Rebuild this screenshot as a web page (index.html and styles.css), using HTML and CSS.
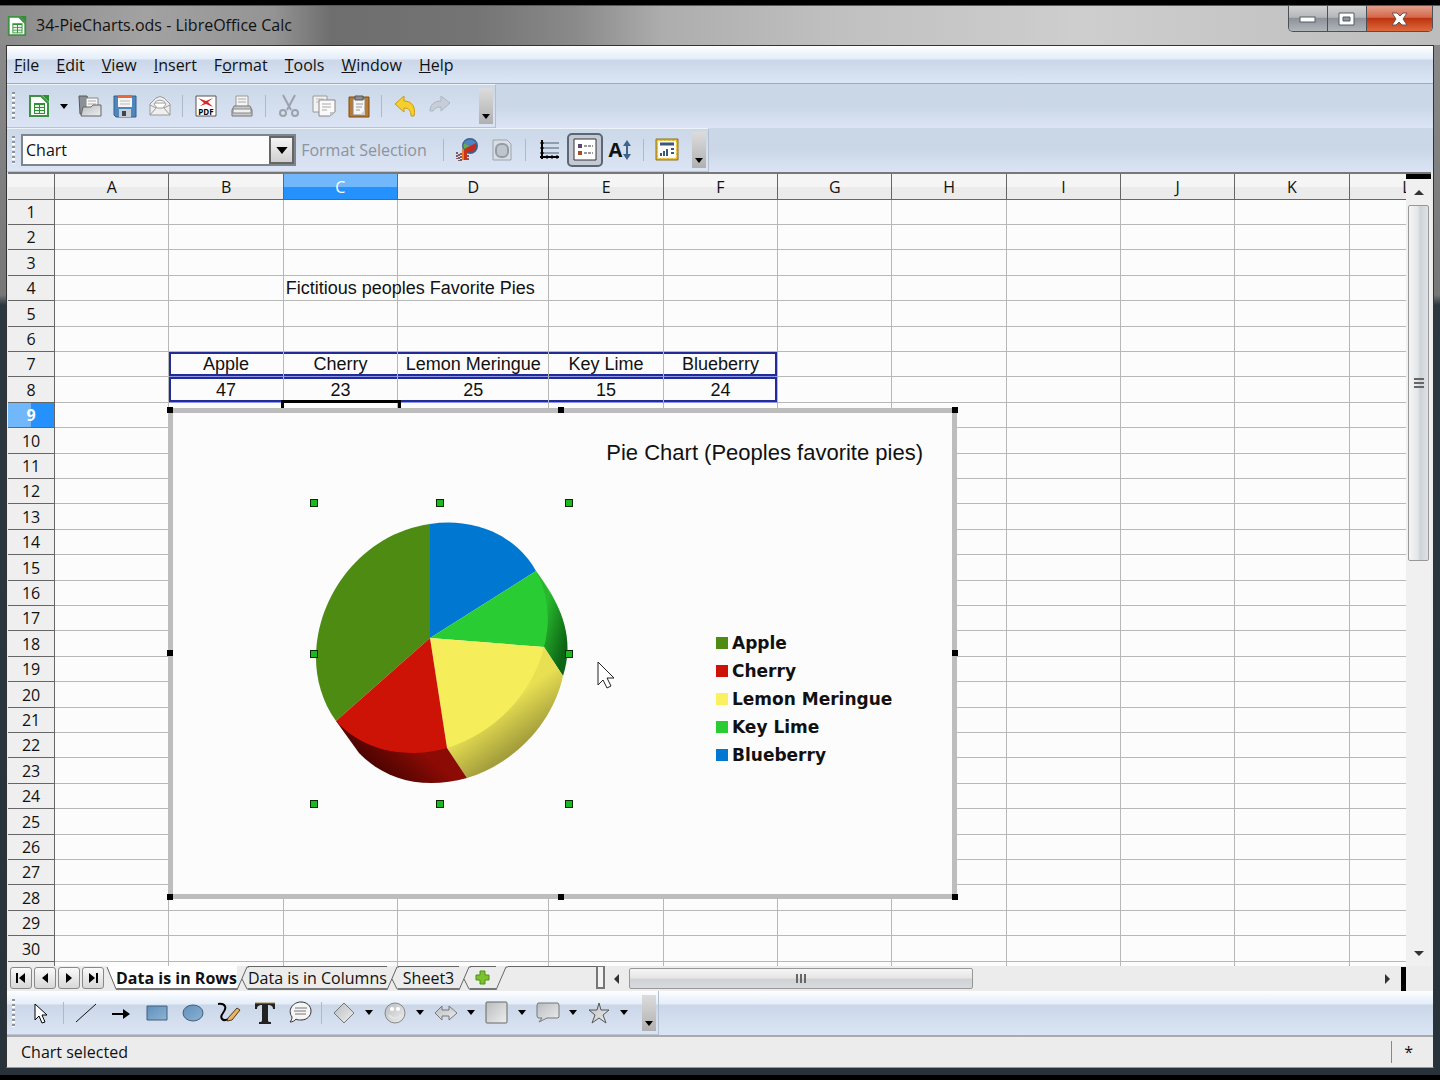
FILE: index.html
```html
<!DOCTYPE html>
<html lang="en">
<head>
    <meta charset="UTF-8">
    <meta name="viewport" content="width=device-width, initial-scale=1.0">
    <title>34-PieCharts.ods - LibreOffice Calc</title>
    <link rel="stylesheet" href="styles.css">
</head>
<body>
    <!-- gradients shared by the icons -->
    <svg class="defs" width="0" height="0" aria-hidden="true">
        <defs>
            <linearGradient id="silver" x1="0" y1="0" x2="1" y2="1"><stop offset="0" stop-color="#b9bcc0"/><stop offset="1" stop-color="#eeeeee"/></linearGradient>
            <linearGradient id="blue" x1="0" y1="0" x2="1" y2="1"><stop offset="0" stop-color="#5f8fbb"/><stop offset="1" stop-color="#8fb3d3"/></linearGradient>
            <symbol id="calc" viewBox="0 0 24 24">
                <path d="M3 2h11l7 7v13H3z" fill="#fff" stroke="#3d9140" stroke-width="2"/>
                <path d="M15 1h7v7z" fill="#2f8f35"/>
                <path d="M7 9h11v11H7z" fill="#2f8f35"/>
                <path d="M8 11h4v2H8zM13 11h4v2h-4zM8 14h4v2H8zM13 14h4v2h-4zM8 17h4v2H8zM13 17h4v2h-4z" fill="#e8f5e8"/>
            </symbol>
            <symbol id="down" viewBox="0 0 8 5"><path d="M0 0h8L4 5z"/></symbol>
        </defs>
    </svg>

    <div class="window">
        <header class="titlebar">
            <svg class="app-icon" width="22" height="24"><use href="#calc"/></svg>
            <h1>34-PieCharts.ods - LibreOffice Calc</h1>
            <div class="window-buttons">
                <button type="button" class="min" aria-label="Minimize"><svg width="18" height="10"><rect x="1" y="3" width="15" height="5" fill="#fff" stroke="#555b66"/></svg></button>
                <button type="button" class="max" aria-label="Maximize"><svg width="18" height="14"><path d="M1 1h15v12H1z" fill="#fff" stroke="#555b66"/><path d="M5 5h7v4H5z" fill="#8e959e" stroke="#555b66"/></svg></button>
                <button type="button" class="close" aria-label="Close"><svg width="18" height="14"><path d="M1 1h5l3 3 3-3h4l-4 6 4 6h-5l-3-3-3 3H1l4-6z" fill="#fff" stroke="#6b5050"/></svg></button>
            </div>
        </header>

        <div class="client">
            <nav class="menubar">
                <button type="button"><u>F</u>ile</button>
                <button type="button"><u>E</u>dit</button>
                <button type="button"><u>V</u>iew</button>
                <button type="button"><u>I</u>nsert</button>
                <button type="button">F<u>o</u>rmat</button>
                <button type="button"><u>T</u>ools</button>
                <button type="button"><u>W</u>indow</button>
                <button type="button"><u>H</u>elp</button>
            </nav>

            <div class="dock">
                <div class="toolbar">
                    <span class="grip"></span>
                    <button type="button" class="tool" aria-label="New"><svg width="24" height="24"><use href="#calc"/></svg></button>
                    <button type="button" class="drop" aria-label="New menu"><svg width="8" height="5"><use href="#down"/></svg></button>
                    <button type="button" class="tool" aria-label="Open"><svg width="24" height="24" viewBox="0 0 24 24"><path d="M1 2h8l1 3v15H2z" fill="#8b9096" stroke="#55595d"/><path d="M8 4h12v12H8z" fill="#f7f7f7" stroke="#888"/><path d="M10 7h8M10 10h8" stroke="#aaa"/><path d="M5 13h8l2-2h8v11H3z" fill="url(#silver)" stroke="#666"/></svg></button>
                    <button type="button" class="tool" aria-label="Save"><svg width="24" height="24" viewBox="0 0 24 24"><path d="M1 2h22v21H3l-2-2z" fill="#4f87bd" stroke="#33618f"/><path d="M5 1h14v12H5z" fill="#f6f6f6"/><path d="M5 1h14v3H5z" fill="#e8683c"/><path d="M7 7h10M7 10h10" stroke="#bbb"/><path d="M6 15h12v8H6z" fill="#c6ced6"/><path d="M9 17h4v5H9z" fill="#3d4650"/></svg></button>
                    <button type="button" class="tool" aria-label="E-mail"><svg width="24" height="24" viewBox="0 0 24 24"><path d="M2 10l6-6q4-3 8 0l6 6v11H2z" fill="#efefef" stroke="#9a9a9a"/><path d="M6 10c2-5 10-5 12 0l-3 4H9z" fill="#fff" stroke="#9a9a9a"/><path d="M2 11l6 3-6 7M22 11l-6 3 6 7M7 9h10" fill="none" stroke="#9a9a9a"/></svg></button>
                    <span class="sep"></span>
                    <button type="button" class="tool" aria-label="Export as PDF"><svg width="24" height="24" viewBox="0 0 24 24"><path d="M2 2h20v20H2z" fill="#fff" stroke="#555"/><path d="M4 4l8 3 7-3-5 4 5 5-7-3-6 2 4-3z" fill="#d9262c"/><text x="12" y="21" class="pdf-text">PDF</text></svg></button>
                    <button type="button" class="tool wide" aria-label="Print"><svg width="24" height="24" viewBox="0 0 24 24"><path d="M6 2h12v11H6z" fill="#f4f4f4" stroke="#999"/><path d="M8 5h8M8 8h8" stroke="#aaa"/><path d="M4 12h16l2 4v6H2v-6z" fill="#c9c9c9" stroke="#777"/><path d="M3 15h18v4H3z" fill="#f0f0f0" stroke="#888"/></svg></button>
                    <span class="sep"></span>
                    <button type="button" class="tool" aria-label="Cut"><svg width="24" height="24" viewBox="0 0 24 24" fill="none" stroke="#9ba2ab"><path d="M6 1l8 15M18 1l-8 15" stroke-width="2"/><circle cx="6" cy="19" r="3" stroke-width="2"/><circle cx="18" cy="19" r="3" stroke-width="2"/></svg></button>
                    <button type="button" class="tool" aria-label="Copy"><svg width="24" height="24" viewBox="0 0 24 24"><path d="M1 2h14v16H1z" fill="#f2f2f2" stroke="#9a9a9a"/><path d="M4 5h8M4 8h8" stroke="#bbb"/><path d="M7 6h16v12l-5 4H7z" fill="#fafafa" stroke="#888"/><path d="M10 10h9M10 13h9M10 16h5" stroke="#aaa"/><path d="M23 18h-5v4z" fill="#c4c4c4"/></svg></button>
                    <button type="button" class="tool" aria-label="Paste"><svg width="24" height="24" viewBox="0 0 24 24"><path d="M2 3h20v20H2z" fill="#b9792f" stroke="#7a4c16"/><path d="M6 5h12v16H6z" fill="#f6f6f6" stroke="#888"/><path d="M8 2h8v4H8z" fill="#8b8f93" stroke="#555"/><path d="M9 10h7M9 13h6M9 16h4" stroke="#999"/><path d="M13 21l5-5v5z" fill="#ccc"/></svg></button>
                    <span class="sep"></span>
                    <button type="button" class="tool" aria-label="Undo"><svg width="24" height="24" viewBox="0 0 24 24"><path d="M2 10l9-8v5c8 0 12 6 10 15h-3c0-5-2-8-7-8v4z" fill="#f7cf2c" stroke="#c79a12"/></svg></button>
                    <button type="button" class="tool" aria-label="Redo"><svg width="24" height="24" viewBox="0 0 24 24"><path d="M22 9l-9-7v5C6 7 2 11 2 17h3c2-3 4-4 8-4v4z" fill="#c6ced8" stroke="#adb5bf"/></svg></button>
                    <button type="button" class="more first-more" aria-label="More"><svg width="8" height="5"><use href="#down"/></svg></button>
                </div>
            </div>

            <div class="dock">
                <div class="toolbar">
                    <span class="grip"></span>
                    <div class="combo">
                        <select aria-label="Chart element"><option>Chart</option></select>
                        <span class="combo-arrow"><svg width="12" height="7"><use href="#down"/></svg></span>
                    </div>
                    <button type="button" class="format" disabled>Format Selection</button>
                    <span class="sep"></span>
                    <button type="button" class="tool" aria-label="Chart type"><svg width="24" height="24" viewBox="0 0 24 24"><circle cx="15" cy="8" r="7" fill="#c92a20" stroke="#3e5f8c" stroke-width="2"/><path d="M15 8L9 5a7 7 0 0 0 0 6z" fill="#5cae57"/><path d="M15 8L9 5a7 7 0 0 1 12 0z" fill="#4e86c4"/><path d="M7 11h5v11H7z" fill="#c83418"/><path d="M7 11h2v11H7z" fill="#ee7d2a"/><path d="M2 14v7M4 16v7M6 15v8M13 17v5" stroke="#7c5b64" stroke-width="2" stroke-dasharray="2 1"/></svg></button>
                    <button type="button" class="tool" aria-label="Data table"><svg width="24" height="24" viewBox="0 0 24 24"><path d="M3 2h14l4 4v16H3z" fill="#d9dee4" stroke="#9ca3ab"/><rect x="6" y="6" width="12" height="13" rx="5" fill="#bfc5cc" stroke="#949ba3" stroke-width="2"/></svg></button>
                    <span class="sep wide-sep"></span>
                    <button type="button" class="tool" aria-label="Horizontal grids"><svg width="24" height="24" viewBox="0 0 24 24"><path d="M3 5h18M3 10h18M3 15h18" stroke="#4b5f73"/><path d="M4 2v19M2 19h19" stroke="#000" stroke-width="2"/><path d="M2 5h4M2 10h4M2 15h4M9 17v4M14 17v4M19 17v4" stroke="#000"/></svg></button>
                    <button type="button" class="tool pressed" aria-label="Legend" aria-pressed="true"><svg width="24" height="24" viewBox="0 0 24 24"><path d="M1 1h22v21H1z" fill="#fff" stroke="#333"/><path d="M5 6h4v4H5z" fill="#5c4770"/><path d="M5 13h4v4H5z" fill="#a34e25"/><path d="M11 8h9M11 15h9" stroke="#333" stroke-dasharray="3 1"/></svg></button>
                    <button type="button" class="tool" aria-label="Scale text"><span class="scale-text">A</span><svg width="10" height="22" viewBox="0 0 10 22"><path d="M5 4v14" stroke="#3e6288" stroke-width="2"/><path d="M5 1l4 6H1zM5 21l4-6H1z" fill="#3e6288"/></svg></button>
                    <span class="sep"></span>
                    <button type="button" class="tool" aria-label="Automatic layout"><svg width="24" height="24" viewBox="0 0 24 24"><path d="M1 1h22v21H1z" fill="#e5b92a" stroke="#8e7420"/><path d="M3 3h18v17H3z" fill="#fff" stroke="#f7e9a9" stroke-dasharray="2 2"/><path d="M5 6h14" stroke="#3b5876" stroke-width="3"/><path d="M6 18v-3M9 18v-5M12 18v-7M16 11h3M16 15h3" stroke="#3b5876" stroke-width="2"/></svg></button>
                    <button type="button" class="more second-more" aria-label="More"><svg width="8" height="5"><use href="#down"/></svg></button>
                </div>
            </div>

            <main class="workspace">
                <div class="sheet">
                    <table class="grid" id="grid">
                        <thead></thead>
                        <tbody></tbody>
                    </table>

                    <section class="chart">
                        <h2>Pie Chart (Peoples favorite pies)</h2>
                        <div class="chart-body">
                            <svg class="pie" width="264" height="310" viewBox="0 0 264 310">
                                <defs>
                                    <linearGradient id="limeSide" gradientUnits="userSpaceOnUse" x1="234" y1="120" x2="262" y2="128"><stop offset="0" stop-color="#27b82e"/><stop offset="1" stop-color="#0d6414"/></linearGradient>
                                    <linearGradient id="lemonSide" gradientUnits="userSpaceOnUse" x1="190" y1="210" x2="215" y2="245"><stop offset="0" stop-color="#e8e052"/><stop offset="1" stop-color="#a39d3c"/></linearGradient>
                                    <linearGradient id="cherrySide" gradientUnits="userSpaceOnUse" x1="110" y1="250" x2="80" y2="285"><stop offset="0" stop-color="#8d0b05"/><stop offset="1" stop-color="#480300"/></linearGradient>
                                </defs>
                                <path d="M227 73C243 95 269 132 254 178L235 149Z" fill="url(#limeSide)"/>
                                <path d="M235 149L254 178C244 225 205 266 158 280L138 250Z" fill="url(#lemonSide)"/>
                                <path d="M138 250L158 280C112 293 74 280 50 255L27 223Z" fill="url(#cherrySide)"/>
                                <path d="M121 140L27 223C-24 152 28 39 121 26Z" fill="#4d8b13"/>
                                <path d="M121 140V26A126 107 -40 0 1 227 73Z" fill="#0077d0"/>
                                <path d="M121 140L227 73A126 107 -40 0 1 235 149Z" fill="#2acc33"/>
                                <path d="M121 140L235 149A126 107 -40 0 1 138 250Z" fill="#f5ee5a"/>
                                <path d="M121 140L138 250A126 107 -40 0 1 27 223Z" fill="#cc1305"/>
                                <path d="M1 1h8v8H1zM127 1h8v8h-8zM256 1h8v8h-8zM1 152h8v8H1zM256 152h8v8h-8zM1 302h8v8H1zM127 302h8v8h-8zM256 302h8v8h-8z" fill="#062b06"/>
                                <path d="M2 2h6v6H2zM128 2h6v6h-6zM257 2h6v6h-6zM2 153h6v6H2zM257 153h6v6h-6zM2 303h6v6H2zM128 303h6v6h-6zM257 303h6v6h-6z" fill="#1cb81f"/>
                            </svg>
                            <ul class="legend">
                                <li class="apple">Apple</li>
                                <li class="cherry">Cherry</li>
                                <li class="lemon">Lemon Meringue</li>
                                <li class="lime">Key Lime</li>
                                <li class="blueberry">Blueberry</li>
                            </ul>
                        </div>
                        <span class="handle top left"></span><span class="handle top center"></span><span class="handle top right"></span>
                        <span class="handle middle left"></span><span class="handle middle right"></span>
                        <span class="handle bottom left"></span><span class="handle bottom center"></span><span class="handle bottom right"></span>
                        <svg class="cursor" width="18" height="28" viewBox="0 0 18 28"><path d="M1 1v23l5-5 4 8 4-2-4-8h7z" fill="#fff" stroke="#222"/></svg>
                    </section>
                </div>

                <div class="vscroll">
                    <span class="split-row"></span>
                    <button type="button" class="scroll-up" aria-label="Scroll up"><svg width="10" height="6"><path d="M0 6l5-5 5 5z" fill="#333"/></svg></button>
                    <span class="vthumb"><i></i><i></i><i></i></span>
                    <button type="button" class="scroll-down" aria-label="Scroll down"><svg width="10" height="6"><path d="M0 0h10L5 5z" fill="#333"/></svg></button>
                </div>
            </main>

            <div class="tabrow">
                <div class="tabnav">
                    <button type="button" aria-label="First sheet"><svg width="12" height="12"><path d="M2 1v10" stroke="#000" stroke-width="2"/><path d="M10 1v10L4 6z"/></svg></button>
                    <button type="button" aria-label="Previous sheet"><svg width="12" height="12"><path d="M9 1v10L3 6z"/></svg></button>
                    <button type="button" aria-label="Next sheet"><svg width="12" height="12"><path d="M3 1v10l6-5z"/></svg></button>
                    <button type="button" aria-label="Last sheet"><svg width="12" height="12"><path d="M2 1v10l6-5z"/><path d="M10 1v10" stroke="#000" stroke-width="2"/></svg></button>
                </div>
                <div class="tabs">
                    <svg class="edge" width="12" height="25"><path d="M2 0h10v24z" fill="#fff"/><path d="M2 1l9 22" stroke="#666" fill="none"/></svg>
                    <button type="button" class="tab active">Data is in Rows</button>
                    <svg class="edge" width="12" height="25"><path d="M0 24L10 1h2M5 13l5 10h2" stroke="#666" fill="none"/></svg>
                    <button type="button" class="tab">Data is in Columns</button>
                    <svg class="edge" width="12" height="25"><path d="M0 24L10 1h2M5 13l5 10h2" stroke="#666" fill="none"/></svg>
                    <button type="button" class="tab sheet3">Sheet3</button>
                    <svg class="edge" width="12" height="25"><path d="M0 24L10 1h2M5 13l5 10h2" stroke="#666" fill="none"/></svg>
                    <button type="button" class="tab add" aria-label="Add sheet"><svg width="16" height="16"><path d="M5 1h5v4h4v5h-4v4H5v-4H1V5h4z" fill="#7cc22d" stroke="#4f8f18"/></svg></button>
                    <svg class="edge" width="12" height="25"><path d="M0 24L10 1h2" stroke="#666" fill="none"/></svg>
                    <span class="tabfill"></span>
                    <span class="splitter"></span>
                </div>
                <div class="hscroll">
                    <button type="button" aria-label="Scroll left"><svg width="6" height="10"><path d="M6 0v10L1 5z" fill="#333"/></svg></button>
                    <span class="hthumb"><i></i><i></i><i></i></span>
                    <button type="button" class="scroll-right" aria-label="Scroll right"><svg width="6" height="10"><path d="M0 0v10l5-5z" fill="#333"/></svg></button>
                    <span class="split-col"></span>
                </div>
            </div>

            <div class="dock drawing">
                <div class="toolbar">
                    <span class="grip"></span>
                    <button type="button" class="tool select-tool" aria-label="Select"><svg width="24" height="24" viewBox="0 0 24 24"><path d="M7 3v16l4-4 3 7 3-1-3-7h5z" fill="#fff" stroke="#000"/></svg></button>
                    <span class="sep"></span>
                    <button type="button" class="tool" aria-label="Line"><svg width="24" height="24"><path d="M2 21L22 3" stroke="#111"/></svg></button>
                    <button type="button" class="tool" aria-label="Arrow"><svg width="24" height="24"><path d="M3 13h14" stroke="#000" stroke-width="2"/><path d="M14 8l7 5-7 5z"/></svg></button>
                    <button type="button" class="tool wide" aria-label="Rectangle"><svg width="24" height="24"><path d="M2 5h20v14H2z" fill="url(#blue)" stroke="#41607f"/></svg></button>
                    <button type="button" class="tool" aria-label="Ellipse"><svg width="24" height="24"><ellipse cx="12" cy="12" rx="10" ry="8" fill="url(#blue)" stroke="#41607f"/></svg></button>
                    <button type="button" class="tool wide" aria-label="Freeform line"><svg width="24" height="24"><path d="M1 3c8-1 9 4 5 9s0 9 5 6" fill="none" stroke="#000" stroke-width="2"/><path d="M11 17l9-10 3 2-8 10-5 1z" fill="#e9b55d" stroke="#4b3a20"/></svg></button>
                    <button type="button" class="tool" aria-label="Text"><svg width="24" height="24"><path d="M2 2h20v6h-2c0-3-2-4-5-4v15c0 2 1 2 3 2v2H6v-2c2 0 3 0 3-2V4C6 4 4 5 4 8H2z" fill="#222"/><path d="M2 2h20" stroke="#a98a50"/></svg></button>
                    <button type="button" class="tool" aria-label="Callout"><svg width="24" height="24"><path d="M13 1c6 0 10 4 10 9s-4 9-10 9c-2 0-4 0-5-1-1 2-4 3-6 3 1-1 2-3 2-5-5-7 1-15 9-15z" fill="#f5f5f5" stroke="#333"/><path d="M7 7h12M6 10h12M7 13h11" stroke="#777"/></svg></button>
                    <span class="sep"></span>
                    <button type="button" class="tool" aria-label="Basic shapes"><svg width="24" height="24"><path d="M12 2l10 10-10 10L2 12z" fill="url(#silver)" stroke="#777"/></svg></button>
                    <button type="button" class="drop" aria-label="Basic shapes menu"><svg width="8" height="5"><use href="#down"/></svg></button>
                    <button type="button" class="tool" aria-label="Symbol shapes"><svg width="24" height="24"><circle cx="12" cy="12" r="10" fill="url(#silver)" stroke="#888"/><circle cx="9" cy="8" r="2" fill="#fff"/><circle cx="15" cy="8" r="2" fill="#fff"/><path d="M6 14c3 4 9 4 12 0" fill="none" stroke="#e4e4e4" stroke-width="2"/></svg></button>
                    <button type="button" class="drop" aria-label="Symbol shapes menu"><svg width="8" height="5"><use href="#down"/></svg></button>
                    <button type="button" class="tool" aria-label="Block arrows"><svg width="24" height="24"><path d="M1 12l7-7v4h7V5l8 7-8 7v-4H8v4z" fill="url(#silver)" stroke="#777"/></svg></button>
                    <button type="button" class="drop" aria-label="Block arrows menu"><svg width="8" height="5"><use href="#down"/></svg></button>
                    <button type="button" class="tool" aria-label="Flowcharts"><svg width="24" height="24"><rect x="1" y="1" width="21" height="21" rx="1" fill="url(#silver)" stroke="#666"/></svg></button>
                    <button type="button" class="drop" aria-label="Flowcharts menu"><svg width="8" height="5"><use href="#down"/></svg></button>
                    <button type="button" class="tool" aria-label="Callouts"><svg width="24" height="24"><path d="M2 2h20l1 2v12l-1 1H11l-8 4 3-4H2l-1-2V4z" fill="url(#silver)" stroke="#777"/></svg></button>
                    <button type="button" class="drop" aria-label="Callouts menu"><svg width="8" height="5"><use href="#down"/></svg></button>
                    <button type="button" class="tool" aria-label="Stars"><svg width="24" height="24"><path d="M12 2l2 7h8l-6 5 3 8-7-5-7 5 3-8-6-5h8z" fill="url(#silver)" stroke="#555"/></svg></button>
                    <button type="button" class="drop" aria-label="Stars menu"><svg width="8" height="5"><use href="#down"/></svg></button>
                    <button type="button" class="more third-more" aria-label="More"><svg width="8" height="5"><use href="#down"/></svg></button>
                </div>
            </div>

            <footer class="statusbar">
                <span>Chart selected</span>
                <span class="modified">*</span>
            </footer>
        </div>
    </div>

    <script>
        // fill the spreadsheet grid
        var columns = ["A", "B", "C", "D", "E", "F", "G", "H", "I", "J", "K", "L"];
        var lastRow = 30;
        var cells = {
            C4: "Fictitious peoples Favorite Pies",
            B7: "Apple", C7: "Cherry", D7: "Lemon Meringue", E7: "Key Lime", F7: "Blueberry",
            B8: "47", C8: "23", D8: "25", E8: "15", F8: "24"
        };
        var head = "<tr><th class='corner'></th>";
        columns.forEach(function(c) {
            var cls = c == "C" ? "selected" : c == "D" ? "wide-col" : "";
            head += "<th class='" + cls + "'>" + c + "</th>";
        });
        document.querySelector("#grid thead").innerHTML = head + "</tr>";

        var rows = "";
        // one blank row more fills the strip above the tabs
        for (var r = 1; r <= lastRow + 1; r++) {
            rows += "<tr><th class='" + (r == 9 ? "selected" : "") + "'>" + (r <= lastRow ? r : "") + "</th>";
            columns.forEach(function(c) {
                var id = c + r;
                var cls = "";
                if ((r == 7 || r == 8) && cells[id]) cls = "series";
                if (id == "C9") cls = "active-cell";
                rows += "<td class='" + cls + "'>" + (cells[id] || "") + "</td>";
            });
            rows += "</tr>";
        }
        document.querySelector("#grid tbody").innerHTML = rows;
    </script>
</body>
</html>
```
FILE: styles.css
```css
* {
    box-sizing: border-box;
}

body {
    margin: 0;
    background: #000;
    color: #111;
    font-family: "Open Sans", "Noto Sans", sans-serif;
    font-size: 16px;
}

button {
    margin: 0;
    padding: 0;
    border: 0;
    background: none;
    color: inherit;
    font: inherit;
}

svg {
    display: block;
    flex: none;
}

.defs {
    position: absolute;
}

/* window frame */
.window {
    display: flex;
    flex-direction: column;
    height: 100vh;
    padding: 0 6px 7px;
    border-top: 5px solid #000;
    border-bottom: 5px solid #000;
    background: linear-gradient(#8c8c8c, #777 290px, #2c383f 300px, #27323a);
}

.titlebar {
    display: flex;
    align-items: center;
    height: 40px;
    margin: 0 -6px;
    padding-left: 6px;
    border-top: 1px solid #55595c;
    background: linear-gradient(90deg, #8b8b8b, #a2a2a2 10%, #949494 19%, #6e6e6e 23%, #747474 33%, #8a8a8a 40%, #adadad 46%, #c0c0c0 58%, #cecece 75%, #bdbdbd);
}

.titlebar h1 {
    flex: 1;
    margin: 0 0 2px 8px;
    font-size: 16px;
    font-weight: 400;
}

.window-buttons {
    display: flex;
    align-self: flex-start;
    height: 26px;
    margin-right: 7px;
    border: 1px solid #4c5056;
    border-top: 0;
    border-radius: 0 0 5px 5px;
    overflow: hidden;
}

.window-buttons button {
    display: flex;
    align-items: center;
    justify-content: center;
    width: 39px;
    border-right: 1px solid #4c5056;
    background: linear-gradient(#d2d2d2, #b4b7ba 45%, #8d9399 50%, #b0b5ba);
}

.window-buttons .close {
    width: 65px;
    border-right: 0;
    background: linear-gradient(#e3a08c, #d4674a 45%, #bf3310 50%, #dd6a3c);
}

.client {
    display: flex;
    flex: 1;
    flex-direction: column;
    min-height: 0;
    border: 1px solid #333;
    border-bottom-color: #999;
    background: #ececec;
}

/* menu */
.menubar {
    display: flex;
    gap: 17px;
    height: 38px;
    padding: 1px 7px 0;
    border-bottom: 1px solid #9fabbc;
    background: linear-gradient(#fdfeff, #e4edf8 13px, #cbd7e8 14px, #dae6f5);
}

/* toolbars */
.dock {
    display: flex;
    height: 44px;
    background: linear-gradient(#cad7e7 50%, #dbe4f4);
}

.toolbar {
    display: flex;
    align-items: center;
    padding: 0 2px 0 5px;
    border-top: 1px solid #eef3fa;
    border-right: 1px solid #b4bfce;
    border-bottom: 1px solid #b9c3d1;
    background: linear-gradient(#cbd8e8, #dbe4f4);
}

.grip {
    width: 3px;
    height: 28px;
    margin-right: 6px;
    background: repeating-linear-gradient(#8b94a0 0 2px, #fff 2px 4px, transparent 4px 5px);
}

.tool {
    display: flex;
    align-items: center;
    justify-content: center;
    width: 35px;
    height: 34px;
}

.wide {
    width: 37px;
}

.pressed {
    width: 36px;
    border: 2px solid #5d6673;
    border-radius: 5px;
    background: #c3cad6;
}

.drop {
    display: flex;
    justify-content: center;
    width: 16px;
}

.sep {
    width: 1px;
    height: 22px;
    margin: 0 5px;
    background: #aeb8c6;
}

.wide-sep {
    margin: 0 6px;
}

.more {
    display: flex;
    align-items: flex-end;
    justify-content: center;
    width: 14px;
    height: 36px;
    padding-bottom: 5px;
    background: linear-gradient(#dcdcdc, #b0b0b0);
}

.first-more {
    margin-left: 22px;
}

.second-more {
    margin-left: 8px;
}

.third-more {
    margin-left: 10px;
}

.pdf-text {
    font: 700 8px "Open Sans", sans-serif;
    text-anchor: middle;
}

.scale-text {
    font-size: 20px;
    font-weight: 700;
    line-height: 24px;
}

.combo {
    position: relative;
    width: 275px;
    height: 32px;
    border: 2px solid #7f858d;
    background: #fcfcfc;
}

.combo select {
    width: 100%;
    height: 100%;
    padding: 0 3px;
    border: 0;
    background: none;
    color: #111;
    font: inherit;
    appearance: none;
}

.combo-arrow {
    display: flex;
    position: absolute;
    top: 0;
    right: 0;
    align-items: center;
    justify-content: center;
    width: 25px;
    height: 28px;
    border: 2px solid #666;
    background: linear-gradient(#f5f5f5, #cfcfcf);
    pointer-events: none;
}

.format {
    width: 126px;
    margin: 0 11px 0 5px;
    color: #8b939e;
    white-space: nowrap;
}

/* spreadsheet */
.workspace {
    display: flex;
    flex: 1;
    min-height: 0;
    margin: 0 2px 0 1px;
    border-top: 2px solid #777;
}

.sheet {
    position: relative;
    flex: 1;
    overflow: hidden;
    background: #fcfcfc;
}

.grid {
    width: 1456px;
    border-collapse: separate;
    border-spacing: 0;
    table-layout: fixed;
}

.grid th {
    width: 114px;
    height: 25px;
    padding: 0;
    border-right: 1px solid #666;
    border-bottom: 1px solid #666;
    background: #efefef;
    font-weight: 400;
    line-height: 20px;
}

.grid .corner {
    width: 47px;
}

.grid .wide-col {
    width: 151px;
}

.grid thead th {
    height: 26px;
    background: linear-gradient(#f5f5f5 50%, #ebebeb 50%);
}

.grid thead .selected {
    background: linear-gradient(#70b7fc 50%, #2591fc 50%);
    color: #fff;
}

.grid tbody .selected {
    background: linear-gradient(90deg, #70b7fc 50%, #2591fc 50%);
    color: #fff;
    font-weight: 700;
}

.grid td {
    padding: 0 2px;
    border-right: 1px solid #b8b8b8;
    border-bottom: 1px solid #b8b8b8;
    font-family: "Liberation Sans", Arial, sans-serif;
    font-size: 18px;
    line-height: 20px;
    white-space: nowrap;
}

.grid tbody tr:nth-child(5n+3) th,
.grid tbody tr:nth-child(5n) th {
    height: 26px;
}

.grid .series {
    border-bottom-color: #8a96e8;
    box-shadow: inset 0 2px #232b96, inset 0 -2px #232b96;
    text-align: center;
}

.grid .series:nth-child(3) {
    box-shadow: inset 0 2px #232b96, inset 0 -2px #232b96, inset 2px 0 #232b96;
}

.grid .series:nth-child(7) {
    box-shadow: inset 0 2px #232b96, inset 0 -2px #232b96, inset -2px 0 #232b96;
}

.grid .active-cell {
    outline: 3px solid #000;
}

/* chart object */
.chart {
    position: absolute;
    top: 234px;
    left: 160px;
    width: 789px;
    height: 491px;
    padding: 25px 29px 0 0;
    border: 5px solid #bdbdbd;
    background: #fcfcfc;
}

.chart h2 {
    margin: 0;
    font-family: "Liberation Sans", Arial, sans-serif;
    font-size: 22px;
    font-weight: 400;
    line-height: 30px;
    text-align: right;
}

.chart-body {
    display: flex;
    margin: 30px 0 0 136px;
}

.legend {
    margin: 131px 0 0 143px;
    padding: 0;
    font-family: "DejaVu Sans", Verdana, sans-serif;
    font-size: 17px;
    font-weight: 700;
    line-height: 28px;
    list-style: none;
}

.legend li {
    display: flex;
    gap: 4px;
    align-items: center;
    white-space: nowrap;
}

.legend li::before {
    width: 12px;
    height: 12px;
    background: currentColor;
    content: "";
}

.legend .apple::before { background: #4d8b13; }
.legend .cherry::before { background: #cc1305; }
.legend .lemon::before { background: #fbf15e; }
.legend .lime::before { background: #2acc33; }
.legend .blueberry::before { background: #0077d0; }

.handle {
    position: absolute;
    width: 6px;
    height: 6px;
    background: #000;
}

.handle.top { top: -6px; }
.handle.middle { top: calc(50% - 4px); }
.handle.bottom { bottom: -6px; }
.handle.left { left: -6px; }
.handle.center { left: calc(50% - 5px); }
.handle.right { right: -6px; }

.cursor {
    position: absolute;
    top: 248px;
    left: 424px;
}

/* scrollbars */
.vscroll {
    display: flex;
    flex-direction: column;
    align-items: center;
    width: 25px;
    background: #f0f0f0;
}

.split-row {
    width: 100%;
    height: 5px;
    background: #000;
}

.scroll-up {
    padding: 10px 6px;
}

.scroll-down {
    margin-top: auto;
    padding: 9px 6px;
}

.vthumb,
.hthumb {
    display: flex;
    align-items: center;
    justify-content: center;
    gap: 2px;
    border: 1px solid #989898;
    border-radius: 2px;
}

.vthumb {
    flex-direction: column;
    width: 21px;
    height: 45%;
    background: linear-gradient(90deg, #f5f5f5, #e4e6e8 45%, #cdd3d8 60%, #dfe2e5);
}

.vthumb i {
    width: 10px;
    height: 2px;
    background: #666;
}

.hthumb {
    width: 43%;
    height: 21px;
    background: linear-gradient(#f5f5f5, #e6e6e6 45%, #d0d3d6 55%, #d8dadc);
}

.hthumb i {
    width: 2px;
    height: 9px;
    background: #666;
}

/* sheet tabs */
.tabrow {
    display: flex;
    height: 25px;
    padding-left: 3px;
}

.tabnav {
    display: flex;
    gap: 2px;
    padding-top: 1px;
}

.tabnav button {
    display: flex;
    align-items: center;
    justify-content: center;
    width: 22px;
    height: 22px;
    border: 1px solid #888;
    border-radius: 3px;
    background: linear-gradient(#fafafa, #d8d8d8);
}

.tabs {
    display: flex;
    width: 500px;
    margin-left: 1px;
}

.tab {
    height: 24px;
    margin-left: -1px;
    border-top: 1px solid #666;
    border-bottom: 2px solid #777;
    line-height: 20px;
    white-space: nowrap;
}

.tab.active {
    border-top-color: #fff;
    background: #fff;
    font-weight: 700;
}

.sheet3 {
    padding: 0 5px;
}

.add {
    padding: 0 5px;
}

.tabfill {
    flex: 1;
    border-top: 1px solid #666;
}

.splitter {
    width: 9px;
    height: 23px;
    border: 2px solid #777;
    border-top-width: 1px;
    background: #f4f4f4;
}

.hscroll {
    display: flex;
    flex: 1;
    align-items: center;
    margin-right: 27px;
}

.hscroll button {
    padding: 0 10px 0 8px;
}

.hscroll .scroll-right {
    margin-left: auto;
}

.split-col {
    width: 5px;
    height: 24px;
    background: #000;
}

/* drawing toolbar */
.drawing,
.drawing .toolbar {
    background: linear-gradient(#fdfeff, #e4edf8 13px, #cbd7e8 14px, #dae4f5);
}

.drawing {
    height: 45px;
    border-bottom: 1px solid #aaa;
}

.drawing .toolbar {
    border-top: 0;
}

.drawing .sep {
    margin: 0 4px;
}

.select-tool {
    width: 38px;
}

/* status bar */
.statusbar {
    display: flex;
    align-items: center;
    height: 31px;
    padding: 0 20px 0 14px;
    border-top: 1px solid #aaa;
}

.modified {
    margin-left: auto;
    padding-left: 12px;
    border-left: 1px solid #888;
}
```
